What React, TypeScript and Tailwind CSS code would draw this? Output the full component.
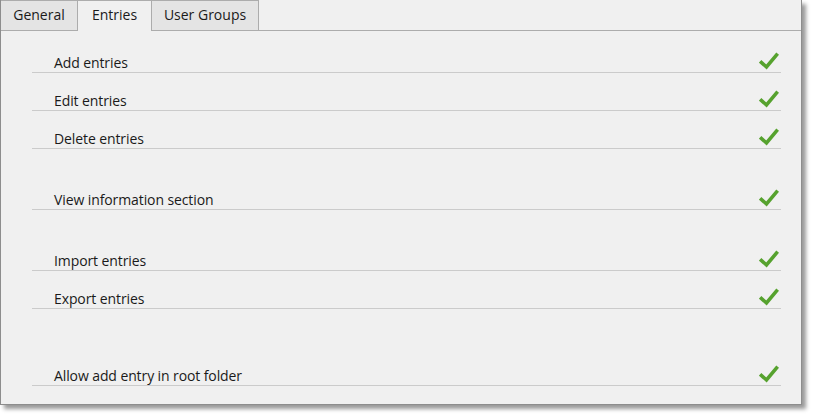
import React from 'react';

const groups: string[][] = [
  ['Add entries', 'Edit entries', 'Delete entries'],
  ['View information section'],
  ['Import entries', 'Export entries'],
  ['Allow add entry in root folder'],
];

function Check() {
  return (
    <svg width="20" height="18" viewBox="0 0 20 18" className="mb-[2px]">
      <path d="M2.5 10.5 L7.5 15 L17.5 3" fill="none" stroke="#56a22e" strokeWidth="3.6" strokeLinecap="square" />
    </svg>
  );
}

function Row({ label }: { label: string }) {
  return (
    <div className="flex h-[38px] items-end justify-between border-b border-[#cbcbcb] pl-[22px] pr-[2px]">
      <span className="pb-[1px] text-[14px] leading-[17px] tracking-[-0.1px] text-[#1a1a1a]">{label}</span>
      <Check />
    </div>
  );
}

export default function App() {
  const tabs = ['General', 'Entries', 'User Groups'];
  const widths = ['w-[76px]', 'w-[75px]', 'w-[107px]'];
  return (
    <div className="h-[415px] w-[813px] bg-white" style={{ fontFamily: '"Open Sans", "Noto Sans", sans-serif' }}>
      <div className="flex h-[405px] w-[802px] flex-col border-x border-b border-[#8d8d8d] bg-[#f0f0f0] shadow-[4px_4px_4px_rgba(0,0,0,0.4)]">
        <div className="flex h-[31px] border-b border-[#acacac]">
          {tabs.map((t, i) => (
            <div
              key={t}
              className={
                i === 1
                  ? `${widths[i]} -mb-px flex h-[31px] items-center justify-center border-x border-t border-[#acacac] bg-[#f0f0f0] pb-[4px] text-[14px] text-[#1a1a1a]`
                  : `${widths[i]} flex h-[30px] items-center justify-center border-t border-[#acacac] bg-[#e4e4e4] pb-[3px] text-[14px] text-[#1a1a1a] ${i === 2 ? 'border-r' : ''}`
              }
            >
              {t}
            </div>
          ))}
        </div>
        <div className="flex flex-col pl-[31px] pr-[20px] pt-[4px]">
          {groups.map((g, gi) => (
            <div key={gi} className={gi === 0 ? '' : gi === 3 ? 'mt-[39px]' : 'mt-[23px]'}>
              {g.map((l) => (
                <Row key={l} label={l} />
              ))}
            </div>
          ))}
        </div>
      </div>
    </div>
  );
}
